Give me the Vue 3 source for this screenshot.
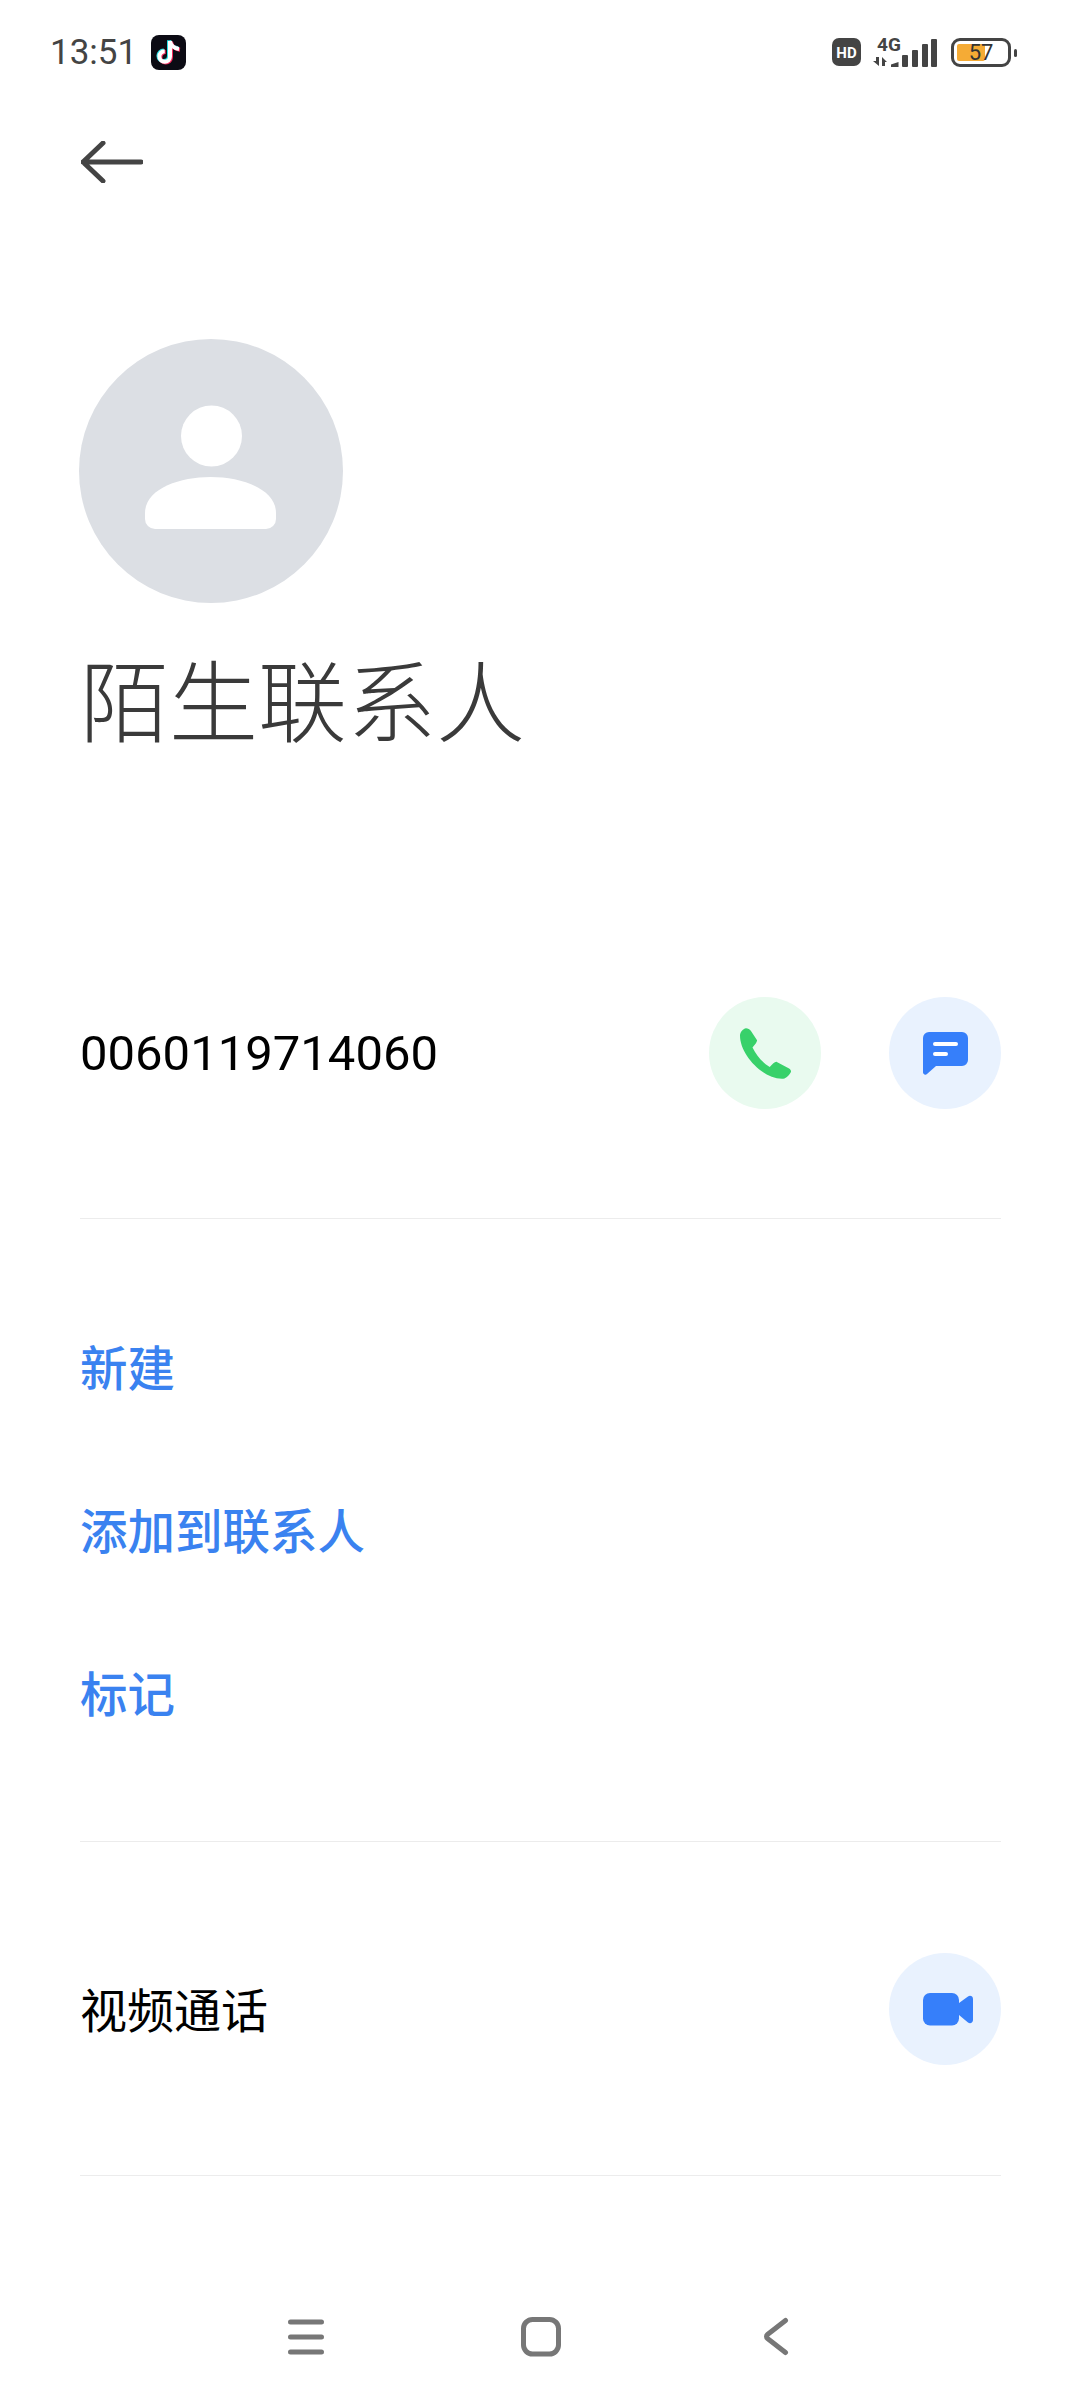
<script setup>
const actions = ['新建', '添加到联系人', '标记']
const bars = [
  { x: 70, y: 19, h: 12 },
  { x: 80, y: 14, h: 17 },
  { x: 90, y: 8, h: 23 },
  { x: 99, y: 3, h: 28 },
]
</script>

<template>
  <div class="page">
    <div class="status">
      <div class="status-left">
        <span class="time">13:51</span>
        <svg class="tiktok" viewBox="0 0 35 35" width="35" height="35">
          <rect width="35" height="35" rx="8" fill="#0c0b14" />
          <g fill="none" stroke-width="4">
            <path stroke="#25e0e6" transform="translate(-1 -0.7)" d="M19 6V21.5a5.3 5.3 0 1 1-5.3-5.3M19 6c.6 4.500 4.500 7.500 9 8" />
            <path stroke="#f5295c" transform="translate(1 0.8)" d="M19 6V21.500a5.300 5.300 0 1 1-5.300-5.300M19 6c.6 4.500 4.500 7.500 9 8" />
            <path stroke="#fff" d="M19 6V21.500a5.300 5.300 0 1 1-5.300-5.300M19 6c.6 4.500 4.500 7.500 9 8" />
          </g>
        </svg>
      </div>
      <div class="status-right">
        <svg class="signal" viewBox="0 0 110 36" width="110" height="36">
          <rect x="0" y="2" width="29" height="28" rx="7" fill="#444" />
          <text x="14.500" y="21.500" text-anchor="middle" class="hd">HD</text>
          <text x="45" y="15" class="fourg">4G</text>
          <path d="M44 21H47V30L41 25H44Z M50 21L55 26H53V30H50Z" fill="#444" />
          <path d="M59 31V28.500L66.500 26V31Z" fill="#444" />
          <rect v-for="bar in bars" :key="bar.x" :x="bar.x" :y="bar.y" width="6" :height="bar.h" rx="1" fill="#444" />
        </svg>
        <div class="battery">
          <span class="battery-fill"></span>
          <span class="battery-text">57</span>
        </div>
        <span class="battery-tip"></span>
      </div>
    </div>

    <div class="topbar">
      <svg viewBox="0 0 62 42" width="62" height="42">
        <path d="M2 21H60M22 2L2 21L22 40" fill="none" stroke="#444" stroke-width="5" stroke-linecap="round" stroke-linejoin="round" />
      </svg>
    </div>

    <div class="content">
      <div class="avatar">
        <svg viewBox="0 0 264 264" width="264" height="264">
          <circle cx="132.500" cy="97" r="30.500" fill="#fff" />
          <path d="M66 174C66 150 100 138 131.500 138C163 138 197 150 197 174V180a10 10 0 0 1-10 10H76a10 10 0 0 1-10-10Z" fill="#fff" />
        </svg>
      </div>
      <h1 class="name">陌生联系人</h1>

      <div class="row phone-row">
        <span class="number">0060119714060</span>
        <div class="buttons">
          <span class="round green">
            <svg viewBox="187 143 151 150" width="51" height="51">
              <path d="M205 143C210 143 216 146 219 151L237 178C239 182 233 191 224 200C236 224 252 244 275 258C284 249 291 241 296 243L331 262C336 265 340 270 337 274C331 284 322 293 311 293C250 290 187 220 187 165C187 155 195 145 205 143Z" fill="#38d16a" />
            </svg>
          </span>
          <span class="round blue">
            <svg viewBox="0 0 45 43" width="45" height="43">
              <path d="M6 0H39a6 6 0 0 1 6 6V28a6 6 0 0 1-6 6H13L4 42a2.400 2.400 0 0 1-4-1.500V6a6 6 0 0 1 6-6Z" fill="#367ffa" />
              <rect x="10" y="10" width="25" height="4" rx="2" fill="#fff" />
              <rect x="10" y="20" width="15" height="4" rx="2" fill="#fff" />
            </svg>
          </span>
        </div>
      </div>
      <div class="divider first"></div>

      <div class="actions">
        <div v-for="action in actions" :key="action" class="action">{{ action }}</div>
      </div>
      <div class="divider second"></div>

      <div class="row video-row">
        <span class="video-label">视频通话</span>
        <span class="round blue">
          <svg class="video-icon" viewBox="0 0 50 33" width="50" height="33">
            <rect x="0" y="0" width="36" height="32.500" rx="7" fill="#367ffa" />
            <path d="M36 10L45 3.500C47 2 50 3 50 6V27C50 30 47 31 45 29.500L36 22Z" fill="#367ffa" />
          </svg>
        </span>
      </div>
      <div class="divider third"></div>
    </div>

    <div class="navbar">
      <svg viewBox="0 0 40 40" width="40" height="40">
        <path d="M4.500 5H35.500M4.500 20H35.500M4.500 35H35.500" fill="none" stroke="#777" stroke-width="5" stroke-linecap="round" />
      </svg>
      <svg viewBox="0 0 40 40" width="40" height="40">
        <rect x="2.500" y="2.500" width="35" height="34.500" rx="9" fill="none" stroke="#777" stroke-width="5" />
      </svg>
      <svg viewBox="0 0 40 40" width="40" height="40">
        <path d="M29.500 3.500L11.500 17.500a2.500 2.500 0 0 0 0 4L29.500 35.500" fill="none" stroke="#777" stroke-width="5" stroke-linecap="round" />
      </svg>
    </div>
  </div>
</template>

<style>
html, body { margin: 0; background: #fff; }
</style>

<style scoped>
.page {
  width: 1080px;
  height: 2400px;
  display: flex;
  flex-direction: column;
  background: #fff;
  font-family: "Noto Sans CJK SC", Roboto, sans-serif;
  overflow: hidden;
}
.status {
  height: 70px;
  padding: 35px 63px 0 50px;
  box-sizing: border-box;
  display: flex;
  justify-content: space-between;
  align-items: flex-start;
}
.status-left { display: flex; align-items: center; gap: 20px; height: 35px; }
.time { font: 400 35px/35px Roboto, sans-serif; color: #444; width: 81px; white-space: nowrap; }
.tiktok { display: block; }
.status-right { display: flex; align-items: flex-start; position: relative; top: 1px; }
.signal { display: block; margin-right: 9px; overflow: visible; }
.hd { font: 700 15px Roboto, sans-serif; fill: #fff; }
.fourg { font: 700 19px Roboto, sans-serif; fill: #444; }
.battery {
  width: 60px;
  height: 29px;
  margin-top: 2px;
  box-sizing: border-box;
  border: 3px solid #444;
  border-radius: 9px;
  position: relative;
  display: flex;
  align-items: center;
  justify-content: center;
}
.battery-fill {
  position: absolute;
  left: 3px;
  top: 3px;
  bottom: 3px;
  width: 28px;
  background: #f5ab35;
  border-radius: 2px;
}
.battery-text { position: relative; font: 400 22px/22px Roboto, sans-serif; color: #333; }
.battery-tip {
  width: 3px;
  height: 8px;
  margin: 13px 0 0 3px;
  background: #444;
  border-radius: 2px;
}
.topbar {
  height: 130px;
  padding: 71px 0 0 81px;
  box-sizing: border-box;
}
.topbar svg { display: block; }
.content { padding: 0 79px 0 80px; }
.avatar {
  width: 264px;
  height: 264px;
  margin: 139px 0 0 -1px;
  border-radius: 50%;
  background: #dcdfe4;
}
.avatar svg { display: block; }
.name {
  margin: 44px 0 0 0;
  font-size: 89px;
  font-weight: 300;
  line-height: 100px;
  color: #3a3a3a;
}
.row { display: flex; justify-content: space-between; align-items: center; }
.phone-row { margin-top: 250px; }
.number { font: 400 49px/56px Roboto, sans-serif; color: #000; padding-top: 2px; }
.buttons { display: flex; gap: 68px; }
.round {
  width: 112px;
  height: 112px;
  border-radius: 50%;
  display: flex;
  align-items: center;
  justify-content: center;
}
.green { background: #e9faef; }
.blue { background: #e9f2fe; }
.divider { height: 1px; background: #ececec; }
.first { margin-top: 109px; }
.actions { padding-top: 65px; }
.action {
  height: 163px;
  display: flex;
  align-items: center;
  font-size: 47.500px;
  font-weight: 500;
  color: #3a82f0;
}
.second { margin-top: 68px; }
.video-row { margin-top: 111px; }
.video-label { font-size: 47px; line-height: 60px; color: #000; padding-bottom: 3px; }
.video-icon { margin-left: 5px; }
.third { margin-top: 110px; }
.navbar {
  margin-top: auto;
  height: 126px;
  box-sizing: border-box;
  padding: 43px 0 0 1px;
  display: flex;
  justify-content: center;
  align-items: flex-start;
  gap: 195px;
}
</style>
